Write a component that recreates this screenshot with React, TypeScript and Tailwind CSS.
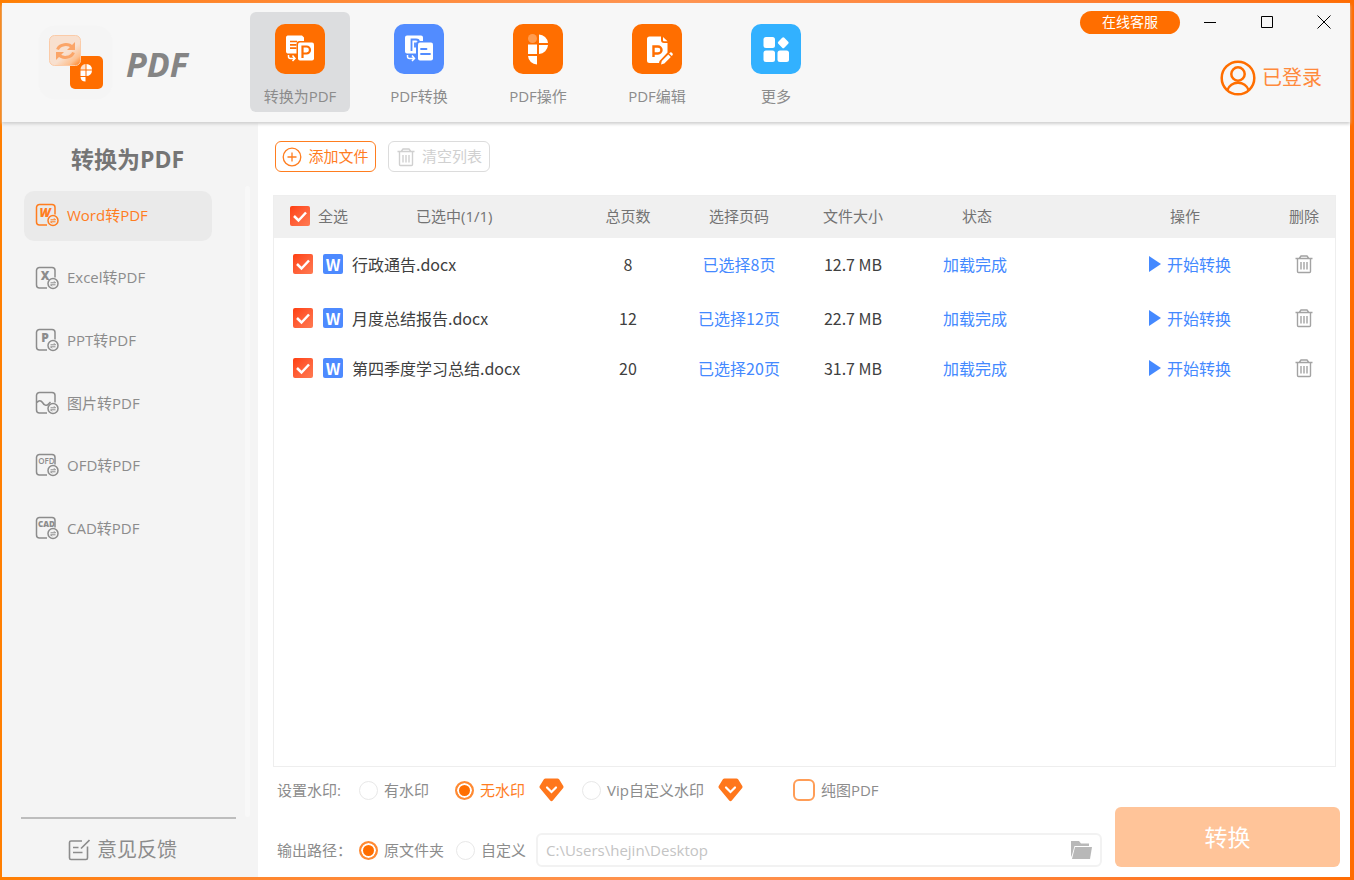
import * as React from 'react';
import { clsx } from 'clsx';

const ORANGE = '#ff6e00';

type IconProps = { className?: string };

function Logo() {
	return (
		<svg viewBox="0 0 75 75" className="size-[75px]" aria-hidden="true">
			<defs>
				<linearGradient id="logo-glass" x1="0.3" y1="0.2" x2="1" y2="1">
					<stop offset="0.45" stopColor="#f8e0cf" />
					<stop offset="0.75" stopColor="#fdc08f" />
					<stop offset="1" stopColor="#ff7a14" />
				</linearGradient>
			</defs>
			<rect x="0.5" y="0.5" width="74" height="74" rx="17" fill="#f5f5f5" />
			<rect x="32" y="31" width="33" height="33" rx="5" fill={ORANGE} />
			<rect x="11.5" y="10.5" width="31" height="30" rx="5" fill="url(#logo-glass)" stroke="#fbcba8" />
			<g fill="none" stroke="#fba568" strokeWidth="3">
				<path d="M19.500 24.500a8.500 7 0 0 1 15-2" />
				<path d="M35.500 27.500a8.500 7 0 0 1-15 2" />
			</g>
			<path d="M37 17v8h-8zM18 35v-8h8z" fill="#fba568" />
			<g fill="#fff">
				<path d="M48.500 39a5.500 5.500 0 0 1 5.500 5.500h-5.500zM48.500 45.500H54a5.500 5.500 0 0 1-5.500 5.500zM42.500 45.500h5V51h-5zM42.500 52h5v4.500a5 5 0 0 1-5-4.500z" />
				<path d="M42.500 44.500a5.500 5.500 0 0 1 5-5.500v5.500z" opacity="0.8" />
			</g>
		</svg>
	);
}

function ToPdfIcon({ className }: IconProps) {
	return (
		<svg viewBox="0 0 50 50" className={className} aria-hidden="true">
			<rect width="50" height="50" rx="10" fill={ORANGE} />
			<path d="M12.500 11.500h14.500l2 2V17h-4.500a3 3 0 0 0-3 3v9.500h-9a2 2 0 0 1-1.500-2V13.500a2 2 0 0 1 1.500-2z" fill="#fff" />
			<path d="M15 17.500h7M15 20.800h6.500M15 24.200h6.500" stroke={ORANGE} strokeWidth="1.700" />
			<rect x="23" y="18.500" width="16" height="18" rx="2" fill="#fff" />
			<path d="M27.500 34V22.500h4a3.500 3.500 0 0 1 0 7h-4" fill="none" stroke={ORANGE} strokeWidth="2.200" />
			<path d="M13.500 31v1.500a2 2 0 0 0 2 2h4M17.500 31.500l2.500 3-2.500 2.500" fill="none" stroke="#fff" strokeWidth="1.500" />
		</svg>
	);
}

function FromPdfIcon({ className }: IconProps) {
	return (
		<svg viewBox="0 0 50 50" className={className} aria-hidden="true">
			<rect width="50" height="50" rx="10" fill="#528cff" />
			<path d="M13 11.500h14a2 2 0 0 1 2 2V17h-4a3 3 0 0 0-3 3v9.500h-9a2 2 0 0 1-2-2v-14a2 2 0 0 1 2-2z" fill="#fff" />
			<path d="M17.500 27V15.500h4.500q3 0 3 2.500M21 18.500v5" fill="none" stroke="#528cff" strokeWidth="1.800" />
			<rect x="24" y="18.500" width="15" height="18" rx="2" fill="#fff" />
			<path d="M27 25h5.500M27 30h9" stroke="#528cff" strokeWidth="1.800" strokeLinecap="round" />
			<path d="M13.500 31v1.500a2 2 0 0 0 2 2h4.500M18 31.500l2.500 3-2.500 2.500" fill="none" stroke="#fff" strokeWidth="1.500" />
		</svg>
	);
}

function OperateIcon({ className }: IconProps) {
	return (
		<svg viewBox="0 0 50 50" className={className} aria-hidden="true">
			<rect width="50" height="50" rx="10" fill={ORANGE} />
			<circle cx="19.500" cy="14.500" r="4.500" fill="#ff9c50" />
			<path
				d="M26 10.500a9.500 9.500 0 0 1 9 8.500h-9zM26 21h9a9.500 9.500 0 0 1-9 9zM15 20.500h9V30h-9zM15 32h9v8.500a9 9 0 0 1-9-8.500z"
				fill="#fff"
			/>
		</svg>
	);
}

function EditIcon({ className }: IconProps) {
	return (
		<svg viewBox="0 0 50 50" className={className} aria-hidden="true">
			<rect width="50" height="50" rx="10" fill={ORANGE} />
			<path
				d="M17.500 12.500H29V16a3 3 0 0 0 3 3h3.500v9.500l-8 8.500-.5 2h-9.500a2.500 2.500 0 0 1-2.500-2.500v-21.500a2.500 2.500 0 0 1 2.500-2.500z"
				fill="#fff"
			/>
			<path d="M31 13l4.500 4.200H32a1 1 0 0 1-1-1z" fill="#fff" />
			<path d="M21.500 33V22.500H26a3.500 3.500 0 0 1 0 7h-4.500" fill="none" stroke={ORANGE} strokeWidth="2.400" />
			<path d="M29 40.500l.8-3.500 6.500-6.500 2.500 2.500-6.500 6.500z" fill="#fff" />
			<path d="M37.200 29.500l1-1q1-.5 2 .5t.5 2l-1 1z" fill="#fff" />
		</svg>
	);
}

function MoreIcon({ className }: IconProps) {
	return (
		<svg viewBox="0 0 50 50" className={className} aria-hidden="true">
			<rect width="50" height="50" rx="10" fill="#32b1ff" />
			<g fill="#fff">
				<rect x="12.500" y="13" width="11.500" height="11" rx="2.500" />
				<rect x="12.500" y="26.500" width="11.500" height="11.500" rx="2.500" />
				<rect x="26.500" y="26.500" width="11.500" height="11.500" rx="2.500" />
				<rect x="28" y="14.500" width="8.500" height="8.500" rx="1.500" transform="rotate(45 32.250 18.750)" />
			</g>
		</svg>
	);
}

function FormatIcon({ kind }: { kind: string }) {
	const wide = kind.length > 1;
	return (
		<svg viewBox="0 0 24 24" className="size-6 shrink-0" fill="none" stroke="currentColor" strokeWidth="1.500" aria-hidden="true">
			<path d="M12 22H4.500a3 3 0 0 1-3-3V4.500a3 3 0 0 1 3-3h12.500a3 3 0 0 1 3 3v7" />
			{kind === 'img' ? (
				<path d="M2 11.500c1.500-2.500 4-2.500 5.500 0s4 4 6 1.500l2-2" />
			) : (
				<text
					x={wide ? 11.5 : 10}
					y={wide ? 11 : 14}
					textAnchor="middle"
					fill="currentColor"
					stroke="none"
					fontSize={wide ? 8 : 12}
					fontWeight={kind === 'OFD' ? 600 : 800}
					fontStyle={kind === 'W' ? 'italic' : 'normal'}
					fontFamily="Open Sans, sans-serif"
				>
					{kind}
				</text>
			)}
			<circle cx="18" cy="17.500" r="5" />
			<path d="M15.500 16.800h5l-1.500-1.500M20.500 18.800h-5l1.500 1.500" strokeWidth="1" />
		</svg>
	);
}

function TrashIcon({ className }: IconProps) {
	return (
		<svg viewBox="0 0 20 20" className={className} fill="none" stroke="currentColor" strokeWidth="1.400" aria-hidden="true">
			<path d="M1.500 4.500h17M3.500 4.500v13a1 1 0 0 0 1 1h11a1 1 0 0 0 1-1v-13M5.500 4l1.500-2h6l1.500 2M7 8v7.500M10 8v7.500M13 8v7.500" />
		</svg>
	);
}

function UserIcon() {
	return (
		<svg viewBox="0 0 36 36" className="size-9" fill="none" stroke={ORANGE} strokeWidth="2.500" aria-hidden="true">
			<circle cx="18" cy="18" r="16.300" />
			<circle cx="18" cy="14" r="6.700" />
			<path d="M7.500 30a11 10.500 0 0 1 21 0" />
		</svg>
	);
}

function Gem() {
	return (
		<svg viewBox="0 0 25 24" className="h-6 w-[25px]" aria-hidden="true">
			<path d="M6.500.5h12q1 0 1.600.8l4.200 6.700q.6 1-.1 1.900L13.800 22.600q-1.300 1.200-2.600 0L.8 9.900q-.7-.9-.1-1.900l4.200-6.700q.6-.8 1.600-.8z" fill="#ff771c" />
			<path d="M8 9.500l4.500 4.500L17 9.500" fill="none" stroke="#fff" strokeWidth="2.200" strokeLinecap="round" />
		</svg>
	);
}

function CheckBox({ label }: { label: string }) {
	return (
		<span className="grid size-5 shrink-0">
			<input
				type="checkbox"
				defaultChecked
				aria-label={label}
				className="peer col-start-1 row-start-1 size-5 appearance-none rounded-xs bg-linear-to-br from-[#ff3d0a] to-[#ff7a52]"
			/>
			<svg viewBox="0 0 20 20" className="pointer-events-none col-start-1 row-start-1 hidden size-5 peer-checked:block" aria-hidden="true">
				<path d="M4 10l4.500 4.500L16 6.500" fill="none" stroke="#fff" strokeWidth="2.500" />
			</svg>
		</span>
	);
}

interface RadioProps {
	name: string;
	label: string;
	checked?: boolean;
	className?: string;
}

function Radio({ name, label, checked, className }: RadioProps) {
	return (
		<label className={clsx('flex items-center gap-1.5', className)}>
			<input
				type="radio"
				name={name}
				defaultChecked={checked}
				className="size-[19px] shrink-0 appearance-none rounded-full border border-[#e8e8e8] bg-white checked:border-2 checked:border-[#ff8a33] checked:bg-[#ff6e00] checked:shadow-[inset_0_0_0_2px_#fff]"
			/>
			{label}
		</label>
	);
}

const tabs = [
	{ label: '转换为PDF', icon: ToPdfIcon, active: true },
	{ label: 'PDF转换', icon: FromPdfIcon },
	{ label: 'PDF操作', icon: OperateIcon },
	{ label: 'PDF编辑', icon: EditIcon },
	{ label: '更多', icon: MoreIcon },
];

const formats = [
	{ kind: 'W', label: 'Word转PDF', active: true },
	{ kind: 'X', label: 'Excel转PDF' },
	{ kind: 'P', label: 'PPT转PDF' },
	{ kind: 'img', label: '图片转PDF' },
	{ kind: 'OFD', label: 'OFD转PDF' },
	{ kind: 'CAD', label: 'CAD转PDF' },
];

const files = [
	{ name: '行政通告.docx', pages: 8, size: '12.7 MB' },
	{ name: '月度总结报告.docx', pages: 12, size: '22.7 MB' },
	{ name: '第四季度学习总结.docx', pages: 20, size: '31.7 MB' },
];

function Header() {
	return (
		<header className="relative z-10 flex h-[119px] shrink-0 bg-[#f7f7f7] shadow-[0_2px_3px_#cfcfcf]">
			<div className="flex w-[248px] shrink-0 items-center gap-[13px] pl-9">
				<Logo />
				<span className="pt-1 text-[34px] font-bold text-[#858585] italic">PDF</span>
			</div>
			<nav className="flex gap-[19px] pt-[9px]">
				{tabs.map(({ label, icon: Icon, active }) => (
					<button
						key={label}
						type="button"
						className={clsx(
							'flex h-[100px] w-[100px] flex-col items-center gap-3 rounded-md pt-3 text-[#8c8c8c]',
							active && 'bg-[#dcdddf]'
						)}
					>
						<Icon className="size-[50px]" />
						<span className="leading-5">{label}</span>
					</button>
				))}
			</nav>
			<div className="ml-auto flex flex-col items-end gap-6 pt-[5px]">
				<div className="flex items-center pr-3">
					<button type="button" className="mr-4 h-[23px] w-[100px] rounded-full bg-[#ff6e00] text-sm leading-[22px] text-white">
						在线客服
					</button>
					<div className="flex gap-[29px] text-black">
						<button type="button" aria-label="最小化" className="grid size-7 place-items-center">
							<svg viewBox="0 0 14 14" className="size-3.5" stroke="currentColor"><path d="M1 7.500h12" /></svg>
						</button>
						<button type="button" aria-label="最大化" className="grid size-7 place-items-center">
							<svg viewBox="0 0 14 14" className="size-3.5" fill="none" stroke="currentColor"><path d="M1.500 1.500h11v11h-11z" /></svg>
						</button>
						<button type="button" aria-label="关闭" className="grid size-7 place-items-center">
							<svg viewBox="0 0 14 14" className="size-3.5" stroke="currentColor"><path d="M.5.500l13 13M13.500.500l-13 13" /></svg>
						</button>
					</div>
				</div>
				<button type="button" className="flex items-center gap-1.5 pr-7 text-xl text-[#ff8a3c]">
					<UserIcon />
					已登录
				</button>
			</div>
		</header>
	);
}

function Sidebar() {
	return (
		<aside className="flex w-64 shrink-0 bg-[#f4f4f4]">
			<div className="flex flex-1 flex-col">
				<h1 className="pt-[23px] pb-[18px] pl-[69px] text-[23px] leading-7 font-bold text-[#757575]">转换为PDF</h1>
				<nav className="flex h-[363px] flex-col justify-between pr-[33px] pl-[22px]">
					{formats.map(({ kind, label, active }) => (
						<button
							key={kind}
							type="button"
							className={clsx(
								'flex h-[50px] items-center gap-2 rounded-[10px] pb-0.5 pl-[11px]',
								active ? 'bg-[#eaeaea] text-[#ff7d1f]' : 'text-[#8c8c8c]'
							)}
						>
							<FormatIcon kind={kind} />
							{label}
						</button>
					))}
				</nav>
				<div className="mt-auto mr-[9px] ml-[19px] border-t-2 border-[#bdbdbd]">
					<button type="button" className="flex h-[58px] items-center gap-[7px] pt-1 pl-[47px] text-xl text-[#8c8c8c]">
						<svg viewBox="0 0 22 22" className="size-[22px]" fill="none" stroke="currentColor" strokeWidth="1.600" aria-hidden="true">
							<path d="M14 2H3a1.500 1.500 0 0 0-1.500 1.500v15.500A1.500 1.500 0 0 0 3 20.500h15a1.500 1.500 0 0 0 1.500-1.500V7.500M5 8.500h5.500M5 13.500h9.500M13 9.500l8.500-8.500" />
						</svg>
						意见反馈
					</button>
				</div>
			</div>
			<div className="mt-16 mr-2 mb-[60px] w-[5px] rounded-full bg-[#f8f8f8]" />
		</aside>
	);
}

function FileTable() {
	return (
		<table className="w-full table-fixed text-center">
			<colgroup>
				<col />
				<col className="w-[110px]" />
				<col className="w-28" />
				<col className="w-[116px]" />
				<col className="w-32" />
				<col className="w-[234px]" />
				<col className="w-[62px]" />
			</colgroup>
			<thead className="bg-[#f0f0f0] text-[#737373]">
				<tr className="h-[42px] *:pb-0.5">
					<th className="pl-4 font-normal">
						<div className="flex items-center">
							<CheckBox label="全选" />
							<span className="ml-2">全选</span>
							<span className="ml-[68px]">已选中(1/1)</span>
						</div>
					</th>
					<th className="font-normal">总页数</th>
					<th className="font-normal">选择页码</th>
					<th className="font-normal">文件大小</th>
					<th className="pl-1 font-normal">状态</th>
					<th className="pl-[58px] font-normal">操作</th>
					<th className="font-normal">删除</th>
				</tr>
			</thead>
			<tbody className="font-['Noto_Sans_CJK_SC',sans-serif] text-base text-[#404040]">
				{files.map((file) => (
					<tr key={file.name} className="h-[54px] *:pb-0.5 last:h-[46px]">
						<td className="pl-[19px]">
							<div className="flex items-center">
								<CheckBox label={file.name} />
								<span className="mr-[9px] ml-2.5 size-5 rounded-xs bg-[#4d8aff] text-center leading-5 font-bold text-white">
									W
								</span>
								{file.name}
							</div>
						</td>
						<td>{file.pages}</td>
						<td>
							<a href="#pages" className="text-[#4489ff]">已选择{file.pages}页</a>
						</td>
						<td>{file.size}</td>
						<td className="text-[#4489ff]">加载完成</td>
						<td className="pl-[68px]">
							<button type="button" className="inline-flex items-center gap-1.5 text-[#4489ff]">
								<svg viewBox="0 0 12 16" className="h-4 w-3" fill="currentColor" aria-hidden="true"><path d="M0 0l12 8-12 8z" /></svg>
								开始转换
							</button>
						</td>
						<td>
							<button type="button" aria-label="删除" className="block w-full text-[#a3a3a3]">
								<TrashIcon className="mx-auto size-5" />
							</button>
						</td>
					</tr>
				))}
			</tbody>
		</table>
	);
}

function OutputBar() {
	return (
		<footer className="flex items-end gap-[13px] pt-1.5 pr-2.5 pb-2.5 text-[#8c8c8c]">
			<div className="flex flex-1 flex-col gap-[26px] pl-1">
				<div className="flex h-[34px] items-center">
					<span className="w-[82px]">设置水印:</span>
					<Radio name="watermark" label="有水印" />
					<Radio name="watermark" label="无水印" checked className="mr-3.5 ml-[26px] text-[#ff7d1f]" />
					<Gem />
					<Radio name="watermark" label="Vip自定义水印" className="mr-3.5 ml-[18px]" />
					<Gem />
					<label className="ml-[50px] flex items-center gap-1.5">
						<input
							type="checkbox"
							className="size-[22px] appearance-none rounded-md border-2 border-[#ff9d57] bg-white checked:bg-[#ff9d57]"
						/>
						纯图PDF
					</label>
				</div>
				<div className="flex h-[34px] items-center">
					<span className="w-[82px]">输出路径：</span>
					<Radio name="output" label="原文件夹" checked />
					<Radio name="output" label="自定义" className="mr-2.5 ml-3" />
					<div className="flex h-[34px] flex-1 items-center rounded-md border-2 border-[#f2f2f2] pr-2">
						<input
							type="text"
							readOnly
							value="C:\Users\hejin\Desktop"
							aria-label="输出路径"
							className="min-w-0 flex-1 bg-transparent px-2 text-[#c4c4c4] outline-none"
						/>
						<button type="button" aria-label="选择文件夹">
							<svg viewBox="0 0 21 18" className="h-[18px] w-[21px]" fill="#b8b8b8" aria-hidden="true">
								<path d="M0 0h8l2 2.500h8V5H3.500L1 14 0 16z" />
								<path d="M4 6h17l-2 12H1z" />
							</svg>
						</button>
					</div>
				</div>
			</div>
			<button type="button" className="h-[60px] w-[225px] rounded-md bg-[#ffc499] text-[23px] text-white">
				转换
			</button>
		</footer>
	);
}

export default function App() {
	return (
		<div className="flex min-h-screen flex-col bg-linear-to-r from-[#ff7e00] via-[#ff9450] to-[#ff6c00] pt-[3px] pr-1 pb-[3px] pl-0.5 font-['Open_Sans','Noto_Sans_CJK_SC',sans-serif] text-[15px]">
			<Header />
			<div className="flex flex-1 bg-white">
				<Sidebar />
				<main className="flex min-w-0 flex-1 flex-col pt-[19px] pl-[15px]">
					<div className="flex gap-3 pl-0.5">
						<button type="button" className="flex h-[31px] w-[101px] items-center justify-center gap-1.5 rounded-md border border-[#ff7d1f] text-[#ff7d1f]">
							<svg viewBox="0 0 20 20" className="size-5" fill="none" stroke="currentColor" strokeWidth="1.300" aria-hidden="true">
								<circle cx="10" cy="10" r="8.800" />
								<path d="M5.500 10h9M10 5.500v9" />
							</svg>
							添加文件
						</button>
						<button type="button" className="flex h-[31px] w-[102px] items-center justify-center gap-1.5 rounded-md border border-[#dcdcdc] text-[#d0d0d0]">
							<TrashIcon className="size-5" />
							清空列表
						</button>
					</div>
					<section className="mt-[23px] mr-[14px] flex-1 border border-[#eeeeee]">
						<FileTable />
					</section>
					<OutputBar />
				</main>
			</div>
		</div>
	);
}
